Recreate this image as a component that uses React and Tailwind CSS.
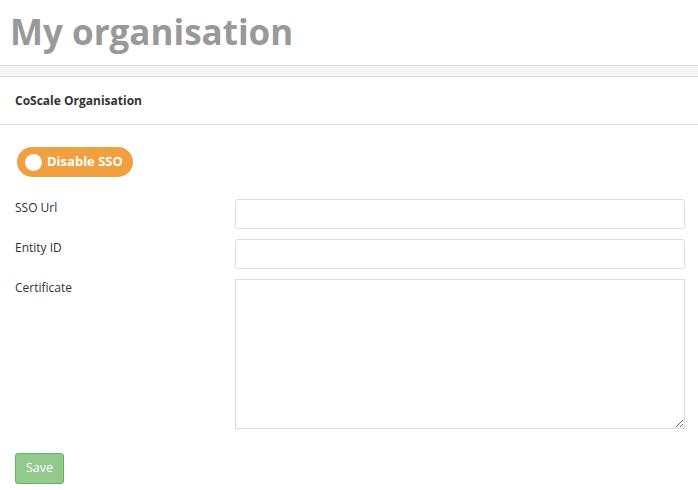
import React from 'react';

const App = () => {
  return (
    <div className="min-h-[490px] bg-white font-['Open_Sans',sans-serif] text-[#333]">
      {/* Page title */}
      <div className="h-[65px] pl-[10px] pt-[10px]">
        <h1 className="text-[35px] font-bold leading-[44px] text-[#999]">My organisation</h1>
      </div>
      <div className="h-[12px] border-y border-[#ddd] bg-[#f5f5f5]" />

      {/* Panel */}
      <div className="border-b border-[#ddd] px-[15px] pt-[16px] pb-[15px]">
        <h2 className="text-[12px] font-bold leading-[16px] text-[#333]">CoScale Organisation</h2>
      </div>

      <div className="pl-[15px] pr-[13px] pt-[22px]">
        <button className="ml-[2px] flex h-[30px] items-center gap-[5px] rounded-full bg-[#f0a040] pl-[8px] pr-[10px] text-[13px] font-bold text-white">
          <span className="h-[17px] w-[17px] rounded-full bg-white" />
          Disable SSO
        </button>

        <form className="mt-[22px] flex flex-col gap-[10px]">
          <div className="flex">
            <label className="w-[220px] pt-[1px] text-[12px] leading-[16px]">SSO Url</label>
            <input className="h-[30px] flex-1 rounded-[3px] border border-[#ddd] px-2 text-[12px] outline-none" />
          </div>
          <div className="flex">
            <label className="w-[220px] pt-[1px] text-[12px] leading-[16px]">Entity ID</label>
            <input className="h-[30px] flex-1 rounded-[3px] border border-[#ddd] px-2 text-[12px] outline-none" />
          </div>
          <div className="flex">
            <label className="w-[220px] pt-[1px] text-[12px] leading-[16px]">Certificate</label>
            <textarea className="h-[150px] flex-1 border border-[#ddd] px-2 text-[12px] outline-none" />
          </div>
        </form>

        <button className="mt-[24px] h-[31px] rounded-[3px] border border-[#5cb85c] bg-[#93c98c] px-[10px] text-[12.5px] text-white">
          Save
        </button>
      </div>
    </div>
  );
};

export default App;
